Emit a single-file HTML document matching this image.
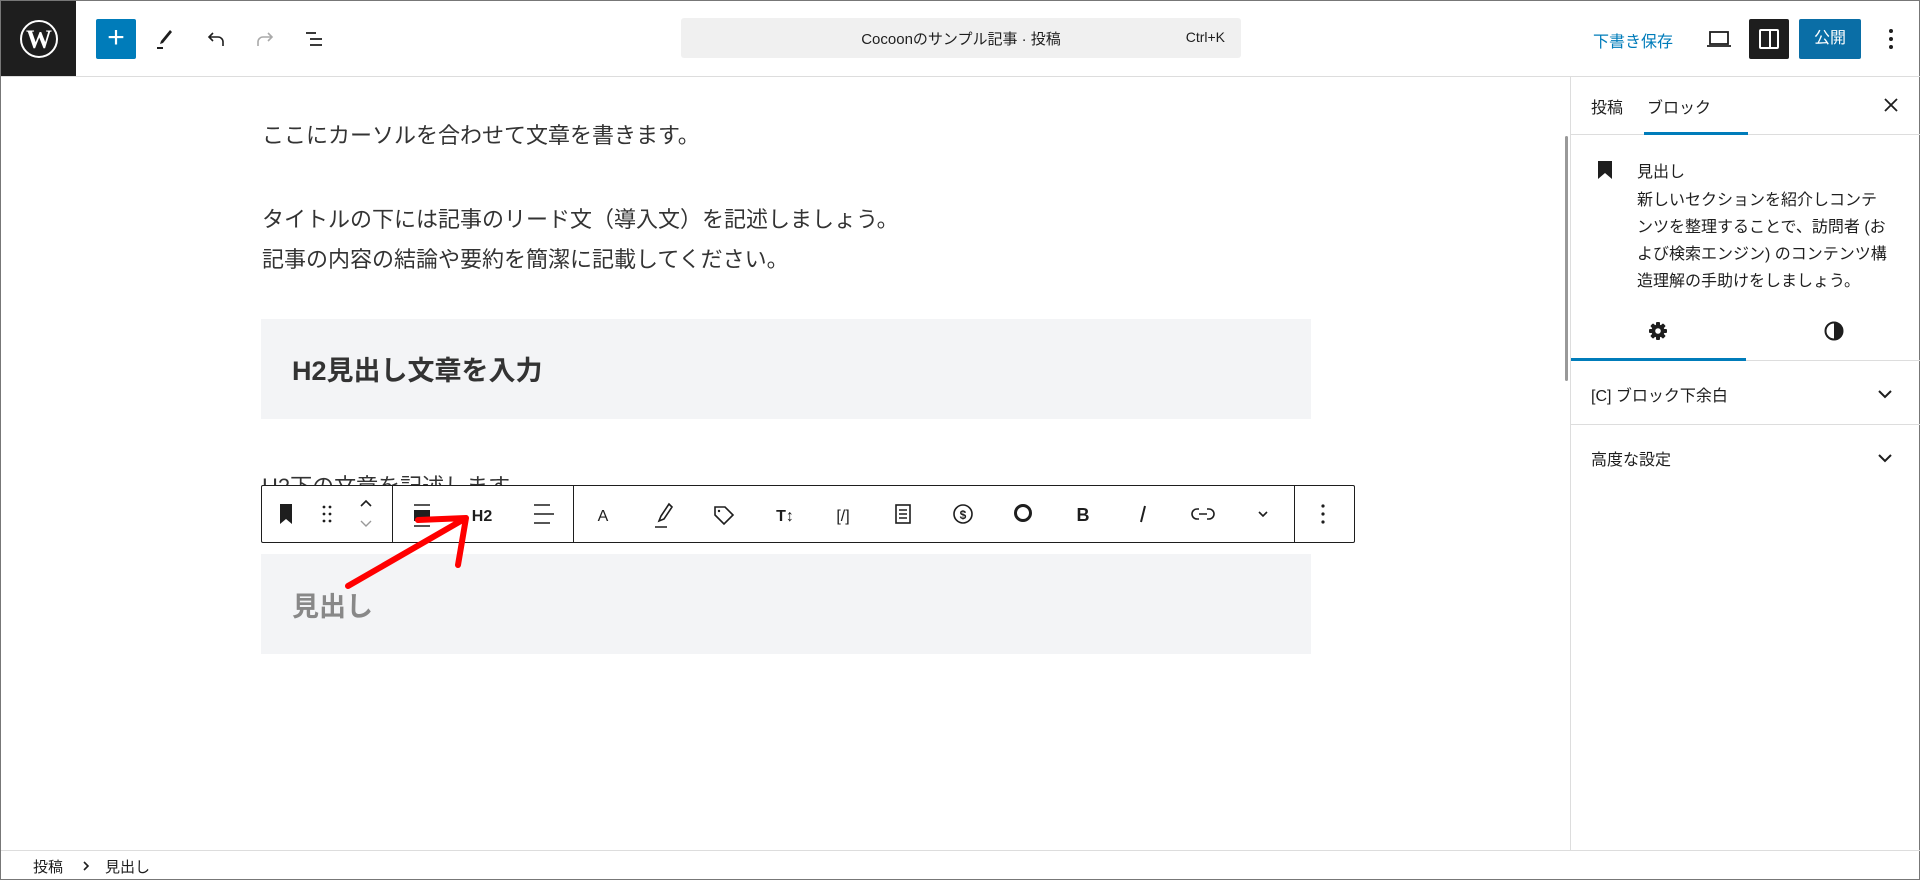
<!DOCTYPE html>
<html><head><meta charset="utf-8"><style>
*{box-sizing:border-box;margin:0;padding:0}
body{width:1920px;height:880px;overflow:hidden;background:#fff;font-family:"Liberation Sans","Noto Sans CJK JP",sans-serif;color:#1e1e1e;position:relative;border:1px solid #777}
.a{position:absolute}
svg{display:block}
.p{font-size:22px;color:#333;left:261px;white-space:nowrap}
.sd{font-size:16px;line-height:27px;color:#1e1e1e}
</style></head><body>
<div class="a" style="left:0;top:0;width:1920px;height:76px;border-bottom:1px solid #ddd"></div>
<div class="a" style="left:0;top:0;width:75px;height:75px;background:#1e1e1e;display:flex;align-items:center;justify-content:center">
<svg width="40" height="40" viewBox="0 0 40 40"><circle cx="20" cy="20" r="18" fill="none" stroke="#fff" stroke-width="2"/><text x="20" y="29" text-anchor="middle" font-family="Liberation Serif" font-size="26" font-weight="bold" fill="#fff">W</text></svg></div>
<div class="a" style="left:95px;top:18px;width:40px;height:40px;background:#007cba;border-radius:2px;color:#fff;font-size:30px;line-height:38px;text-align:center">+</div>
<svg class="a" style="left:152px;top:26px" width="24" height="24" viewBox="0 0 24 24"><path d="M17 3l2 2-9 11-3 1 1-3z" fill="#1e1e1e"/><rect x="4" y="20" width="6" height="2" fill="#1e1e1e"/></svg>
<svg class="a" style="left:203px;top:26px" width="24" height="24" viewBox="0 0 24 24"><path d="M9 6L5 10l4 4M5 10h9a5 5 0 015 5v4" fill="none" stroke="#1e1e1e" stroke-width="1.6"/></svg>
<svg class="a" style="left:252px;top:26px" width="24" height="24" viewBox="0 0 24 24"><path d="M15 6l4 4-4 4M19 10h-9a5 5 0 00-5 5v4" fill="none" stroke="#aaa" stroke-width="1.6"/></svg>
<svg class="a" style="left:302px;top:26px" width="24" height="24" viewBox="0 0 24 24"><path d="M3 6h10M7 12h12M7 18h12" stroke="#1e1e1e" stroke-width="1.8"/></svg>
<div class="a" style="left:680px;top:17px;width:560px;height:40px;background:#f0f0f0;border-radius:3px;font-size:15px"><span class="a" style="left:0;width:100%;text-align:center;top:10px">Cocoonのサンプル記事 · 投稿</span><span class="a" style="right:16px;top:11px;font-size:14px">Ctrl+K</span></div>
<div class="a" style="left:1592px;top:27px;font-size:16px;color:#007cba">下書き保存</div>
<svg class="a" style="left:1705px;top:25px" width="26" height="26" viewBox="0 0 26 26"><rect x="4" y="6" width="18" height="12" fill="none" stroke="#1e1e1e" stroke-width="1.8"/><path d="M1 20h24" stroke="#1e1e1e" stroke-width="1.8"/></svg>
<div class="a" style="left:1748px;top:18px;width:40px;height:40px;background:#1e1e1e;border-radius:2px"><div class="a" style="left:10px;top:10px;width:20px;height:20px;border:2px solid #fff;border-radius:2px"></div><div class="a" style="left:20px;top:10px;width:2px;height:20px;background:#fff"></div></div>
<div class="a" style="left:1798px;top:18px;width:62px;height:40px;background:#0a6ea6;border-radius:2px;color:#fff;font-size:16px;text-align:center;line-height:40px">公開</div>
<svg class="a" style="left:1880px;top:24px" width="20" height="28"><circle cx="10" cy="6" r="2" fill="#1e1e1e"/><circle cx="10" cy="14" r="2" fill="#1e1e1e"/><circle cx="10" cy="22" r="2" fill="#1e1e1e"/></svg>

<div class="a p" style="top:117px">ここにカーソルを合わせて文章を書きます。</div>
<div class="a p" style="top:201px">タイトルの下には記事のリード文（導入文）を記述しましょう。</div>
<div class="a p" style="top:241px">記事の内容の結論や要約を簡潔に記載してください。</div>
<div class="a" style="left:260px;top:318px;width:1050px;height:100px;background:#f3f4f6"></div>
<div class="a" style="left:291px;top:348px;font-size:27px;font-weight:bold;color:#333">H2見出し文章を入力</div>
<div class="a p" style="top:468px">H2下の文章を記述します。</div>
<div class="a" style="left:260px;top:553px;width:1050px;height:100px;background:#f3f4f6"></div>
<div class="a" style="left:291px;top:584px;font-size:27px;font-weight:bold;color:#888">見出し</div>

<div class="a" style="left:260px;top:484px;width:1094px;height:58px;background:#fff;border:1px solid #1e1e1e;border-radius:2px"></div>
<div class="a" style="left:391px;top:485px;width:1px;height:56px;background:#1e1e1e"></div>
<div class="a" style="left:572px;top:485px;width:1px;height:56px;background:#1e1e1e"></div>
<div class="a" style="left:1293px;top:485px;width:1px;height:56px;background:#1e1e1e"></div>
<svg class="a" style="left:260px;top:484px" width="1094" height="58" viewBox="260 484 1094 58" font-family="Liberation Sans">
<path d="M279 503h12v20l-6-5-6 5z" fill="#1e1e1e"/>
<g fill="#1e1e1e"><circle cx="323" cy="506" r="1.4"/><circle cx="329" cy="506" r="1.4"/><circle cx="323" cy="513" r="1.4"/><circle cx="329" cy="513" r="1.4"/><circle cx="323" cy="520" r="1.4"/><circle cx="329" cy="520" r="1.4"/></g>
<path d="M360 505l5-5 5 5" fill="none" stroke="#1e1e1e" stroke-width="1.6"/><path d="M360 520l5 5 5-5" fill="none" stroke="#999" stroke-width="1.4"/>
<path d="M413 504h16M413 525h16" stroke="#1e1e1e" stroke-width="1.6"/><rect x="413" y="509" width="16" height="11" fill="#1e1e1e"/>
<text x="481" y="520" text-anchor="middle" font-size="16" font-weight="bold" fill="#1e1e1e">H2</text>
<path d="M533 504h16M533 513h20M533 522h16" stroke="#1e1e1e" stroke-width="1.6"/>
<text x="602" y="520" text-anchor="middle" font-size="16" fill="#1e1e1e">A</text>
<path d="M668 503l-8 12-2 5 5-2 8-12zM654 526h12" fill="none" stroke="#1e1e1e" stroke-width="1.6"/>
<path d="M714 506h10l8 8-9 9-9-9z" fill="none" stroke="#1e1e1e" stroke-width="1.6"/><circle cx="718" cy="510" r="1.2" fill="#1e1e1e"/>
<text x="784" y="520" text-anchor="middle" font-size="16" font-weight="bold" fill="#1e1e1e">T↕</text>
<text x="842" y="520" text-anchor="middle" font-size="16" fill="#1e1e1e">[/]</text>
<rect x="895" y="504" width="14" height="18" fill="none" stroke="#1e1e1e" stroke-width="1.6"/><path d="M898 509h8M898 513h8M898 517h8" stroke="#1e1e1e" stroke-width="1.4"/>
<circle cx="962" cy="513" r="9" fill="none" stroke="#1e1e1e" stroke-width="1.6"/><text x="962" y="518" text-anchor="middle" font-size="12" font-weight="bold" fill="#1e1e1e">$</text>
<circle cx="1022" cy="512" r="7.5" fill="none" stroke="#1e1e1e" stroke-width="3"/>
<text x="1082" y="520" text-anchor="middle" font-size="18" font-weight="bold" fill="#1e1e1e">B</text>
<path d="M1144 505l-4 16" stroke="#1e1e1e" stroke-width="2"/>
<path d="M1198 508h-2a5 5 0 000 10h2M1206 508h2a5 5 0 010 10h-2M1198 513h8" fill="none" stroke="#1e1e1e" stroke-width="1.6"/>
<path d="M1258 511l4 4 4-4" fill="none" stroke="#1e1e1e" stroke-width="1.6"/>
<g fill="#1e1e1e"><circle cx="1322" cy="505" r="1.6"/><circle cx="1322" cy="513" r="1.6"/><circle cx="1322" cy="521" r="1.6"/></g>
</svg>
<svg class="a" style="left:0;top:0" width="1920" height="880"><path d="M347 585L465 517M417 519L465 517M465 517L457 564" stroke="#f00" stroke-width="6" fill="none" stroke-linecap="round"/></svg>

<div class="a" style="left:1569px;top:76px;width:1px;height:773px;background:#ddd"></div>
<div class="a" style="left:1564px;top:135px;width:3px;height:245px;background:#999;border-radius:2px"></div>
<div class="a" style="left:1570px;top:133px;width:350px;height:1px;background:#ddd"></div>
<div class="a" style="left:1590px;top:93px;font-size:16px">投稿</div>
<div class="a" style="left:1646px;top:93px;font-size:16px">ブロック</div>
<div class="a" style="left:1643px;top:131px;width:104px;height:3px;background:#007cba"></div>
<svg class="a" style="left:1882px;top:96px" width="16" height="16"><path d="M2 2l12 12M14 2L2 14" stroke="#1e1e1e" stroke-width="1.8"/></svg>
<svg class="a" style="left:1596px;top:160px" width="16" height="18"><path d="M1 0h14v18l-7-6-7 6z" fill="#1e1e1e"/></svg>
<div class="a" style="left:1636px;top:157px;font-size:16px">見出し</div>
<div class="a sd" style="left:1636px;top:186px;width:250px">新しいセクションを紹介しコンテンツを整理することで、訪問者 (および検索エンジン) のコンテンツ構造理解の手助けをしましょう。</div>
<svg class="a" style="left:1647px;top:320px" width="20" height="20" viewBox="0 0 20 20"><g fill="#1e1e1e"><circle cx="10" cy="10" r="6.5"/><rect x="8" y="1" width="4" height="18" rx="1"/><rect x="1" y="8" width="18" height="4" rx="1"/><rect x="8" y="1" width="4" height="18" rx="1" transform="rotate(45 10 10)"/><rect x="8" y="1" width="4" height="18" rx="1" transform="rotate(-45 10 10)"/></g><circle cx="10" cy="10" r="2.8" fill="#fff"/></svg>
<svg class="a" style="left:1823px;top:320px" width="20" height="20"><circle cx="10" cy="10" r="8.5" fill="none" stroke="#1e1e1e" stroke-width="2"/><path d="M10 1.5a8.5 8.5 0 010 17z" fill="#1e1e1e"/></svg>
<div class="a" style="left:1570px;top:359px;width:350px;height:1px;background:#ddd"></div>
<div class="a" style="left:1570px;top:357px;width:175px;height:3px;background:#007cba"></div>
<div class="a" style="left:1590px;top:381px;font-size:16px">[C] ブロック下余白</div>
<svg class="a" style="left:1876px;top:386px" width="16" height="14"><path d="M2 4l6 6 6-6" fill="none" stroke="#1e1e1e" stroke-width="2"/></svg>
<div class="a" style="left:1570px;top:423px;width:350px;height:1px;background:#ddd"></div>
<div class="a" style="left:1590px;top:445px;font-size:16px">高度な設定</div>
<svg class="a" style="left:1876px;top:450px" width="16" height="14"><path d="M2 4l6 6 6-6" fill="none" stroke="#1e1e1e" stroke-width="2"/></svg>

<div class="a" style="left:0;top:849px;width:1920px;height:1px;background:#ddd"></div>
<div class="a" style="left:32px;top:855px;font-size:15px">投稿</div>
<svg class="a" style="left:80px;top:858px" width="10" height="14"><path d="M3 3l4 4-4 4" fill="none" stroke="#1e1e1e" stroke-width="1.6"/></svg>
<div class="a" style="left:104px;top:855px;font-size:15px">見出し</div>
</body></html>
